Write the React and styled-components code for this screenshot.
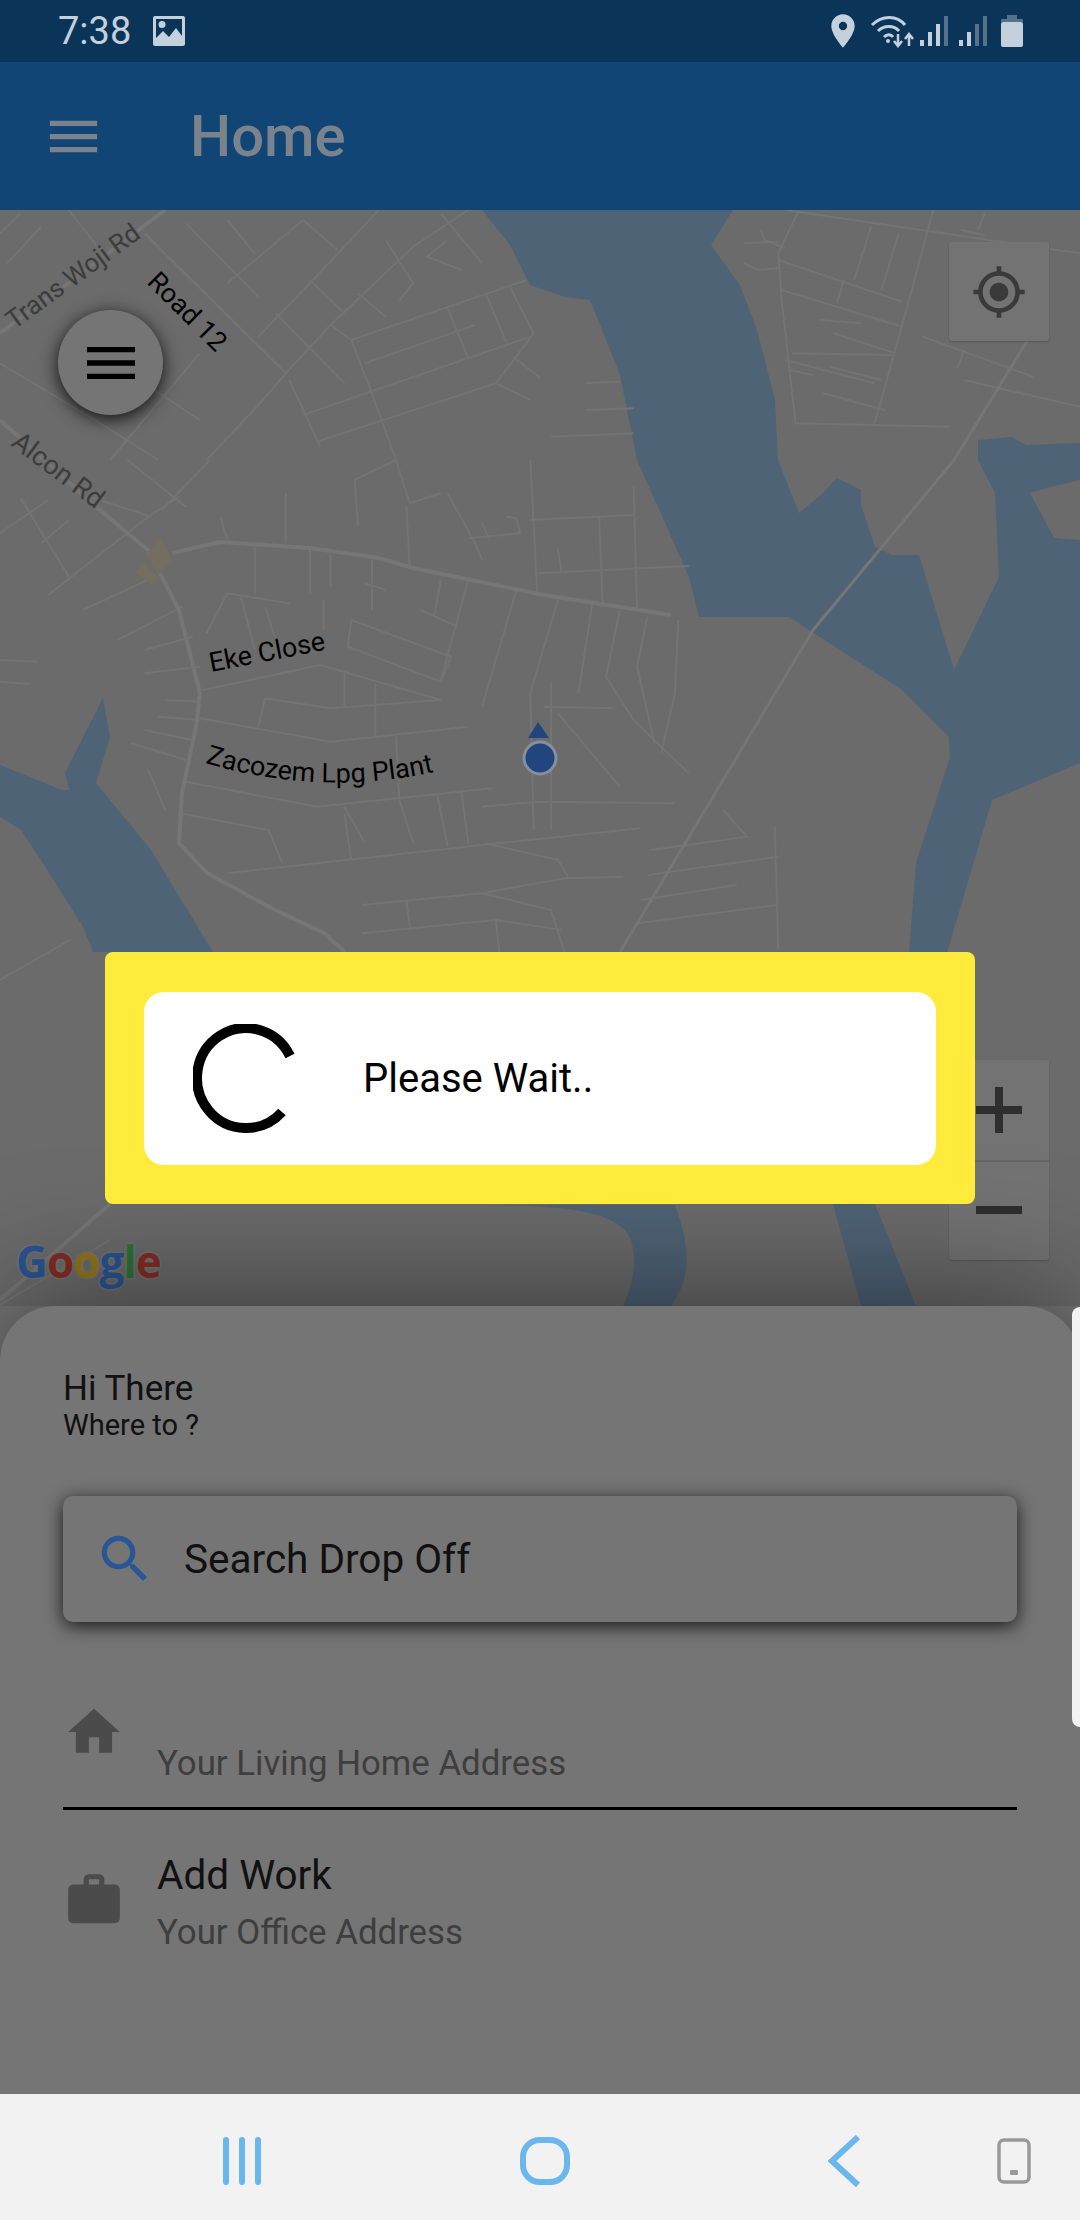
import React from "react";
import styled, { createGlobalStyle } from "styled-components";
import { MdHome, MdWork, MdSearch, MdMenu, MdMyLocation, MdPlace } from "react-icons/md";

const GlobalStyle = createGlobalStyle`
  html, body {
    margin: 0;
    padding: 0;
    background: #757575;
    font-family: Roboto, "Liberation Sans", sans-serif;
  }
`;

const Screen = styled.div`
  position: relative;
  width: 1080px;
  height: 2220px;
  overflow: hidden;
  display: flex;
  flex-direction: column;
`;

const StatusBar = styled.div`
  height: 62px;
  background: #0b3558;
  display: flex;
  align-items: center;
  padding: 0 57px 0 58px;
  color: #c4d0dc;
  flex-shrink: 0;
`;

const Time = styled.span`
  font-size: 38px;
  line-height: 62px;
  width: 95px;
`;

const StatusRight = styled.div`
  margin-left: auto;
  display: flex;
  align-items: center;
`;

const AppBar = styled.div`
  height: 148px;
  background: #114575;
  display: flex;
  align-items: center;
  padding-left: 42px;
  color: #7a838b;
  flex-shrink: 0;
  position: relative;
  z-index: 1;
`;

const AppTitle = styled.h1`
  margin: 0 0 0 85px;
  font-size: 58px;
  font-weight: 500;
`;

const MapArea = styled.div`
  position: relative;
  height: 1096px;
  background: #6b6b6b;
  flex-shrink: 0;
`;

const MapCanvas = styled.svg`
  position: absolute;
  inset: 0;
  width: 1080px;
  height: 1096px;
  display: block;
`;

const RoundMenu = styled.div`
  position: absolute;
  left: 58px;
  top: 100px;
  width: 105px;
  height: 105px;
  border-radius: 50%;
  background: #757575;
  box-shadow: 0 4px 18px rgba(0, 0, 0, 0.85);
  display: flex;
  align-items: center;
  justify-content: center;
  color: #000;
`;

const MapButton = styled.div`
  position: absolute;
  right: 31px;
  top: ${(p) => p.$top}px;
  width: 100px;
  height: ${(p) => p.$height}px;
  background: #737373;
  border-radius: 3px;
  box-shadow: 0 1px 2px rgba(0, 0, 0, 0.2);
  display: flex;
  align-items: center;
  justify-content: center;
  color: #3a3a3a;
`;

const ZoomDivider = styled.div`
  position: absolute;
  right: 31px;
  top: 950px;
  width: 100px;
  height: 2px;
  background: #666;
`;

const GoogleMark = styled.div`
  position: absolute;
  left: 16px;
  top: 1021px;
  font-family: "Open Sans", Roboto, sans-serif;
  font-size: 44px;
  font-weight: 700;
  letter-spacing: -1px;
  text-shadow: 0 0 3px #7a7a7a, 0 0 3px #7a7a7a;
`;

const Letter = styled.span`
  color: ${(p) => p.$color};
`;

const Sheet = styled.div`
  position: relative;
  z-index: 1;
  flex: 1;
  background: #757575;
  border-radius: 55px 55px 0 0;
  padding: 0 63px;
  box-shadow: 0 -6px 130px rgba(0, 0, 0, 0.5);
`;

const Greeting = styled.div`
  margin-top: 64px;
  font-size: 35px;
  line-height: 38px;
  color: #111;
`;

const SubGreeting = styled.div`
  font-size: 29px;
  line-height: 34px;
  color: #111;
`;

const SearchBox = styled.div`
  margin-top: 54px;
  height: 126px;
  border-radius: 10px;
  background: #757575;
  box-shadow: 0 4px 18px rgba(0, 0, 0, 0.8);
  display: flex;
  align-items: center;
  padding-left: 31px;
  color: #111;
  font-size: 40.5px;
`;

const SearchIcon = styled(MdSearch)`
  color: #2a5596;
  margin-right: 28px;
  flex-shrink: 0;
`;

const PlaceRow = styled.div`
  display: flex;
  align-items: ${(p) => p.$align || "center"};
  color: #4b4b4b;
`;

const HomeRow = styled(PlaceRow)`
  margin-top: 71px;
  height: 114px;
  border-bottom: 3px solid #000;
`;

const WorkRow = styled(PlaceRow)`
  margin-top: 37px;
`;

const RowIcon = styled.div`
  width: 94px;
  flex-shrink: 0;
  margin-right: 0;
  display: flex;
  padding-top: ${(p) => p.$top || 0}px;
`;

const RowText = styled.div`
  display: flex;
  flex-direction: column;
`;

const RowTitle = styled.div`
  font-size: 40.5px;
  line-height: 56px;
  color: #111;
`;

const RowHint = styled.div`
  font-size: 34.8px;
  line-height: 40px;
  margin-top: ${(p) => p.$top || 0}px;
  color: #3e3e3e;
`;

const ScrollTab = styled.div`
  position: absolute;
  right: 0;
  top: 1px;
  width: 8px;
  height: 420px;
  background: #f2f2f2;
  border-radius: 12px 0 0 12px;
`;

const NavBar = styled.div`
  height: 126px;
  box-sizing: border-box;
  padding-top: 7px;
  background: #f2f2f2;
  position: relative;
  z-index: 2;
  flex-shrink: 0;
  display: flex;
  align-items: center;
`;

const NavSlot = styled.div`
  margin-left: ${(p) => p.$left}px;
  display: flex;
`;

const Dialog = styled.div`
  position: absolute;
  z-index: 3;
  left: 105px;
  top: 952px;
  width: 870px;
  height: 252px;
  box-sizing: border-box;
  padding: 40px 39px 39px 39px;
  background: #ffeb3b;
  border-radius: 8px;
`;

const DialogBody = styled.div`
  height: 100%;
  background: #fff;
  border-radius: 20px;
  display: flex;
  align-items: center;
  padding-left: 49px;
`;

const WaitText = styled.div`
  margin-left: 68px;
  font-size: 40px;
  color: #000;
`;

// zoomed crops were read at 1.452 across and 3 down
const pts = (list, top) =>
  list.map(([x, y]) => `${(x / 1.452).toFixed(1)},${(top + y / 3).toFixed(1)}`).join(" ");

const upperRoads = [
  [[270, 670], [375, 890]],
  [[440, 660], [330, 850]],
  [[210, 700], [415, 1120]],
  [[440, 660], [490, 750]],
  [[550, 630], [450, 850], [375, 1010]],
  [[680, 630], [600, 740], [480, 975], [415, 1120], [375, 1215], [300, 1380]],
  [[480, 975], [510, 1020], [540, 1180], [575, 1380]],
  [[510, 1020], [765, 840]],
  [[530, 1090], [690, 975]],
  [[440, 1245], [770, 1010]],
  [[460, 1325], [720, 1150]],
  [[650, 925], [680, 1075]],
  [[705, 880], [735, 1025]],
  [[740, 860], [775, 1000], [720, 1150], [770, 1200]],
  [[745, 1070], [785, 1135]],
  [[0, 1090], [130, 1250], [230, 1380]],
  [[100, 1000], [290, 1260]],
  [[290, 1060], [160, 1380]],
  [[420, 1140], [465, 1340]],
  [[850, 1150], [900, 1145]],
  [[800, 1310], [920, 1300]],
  [[1160, 630], [1130, 760], [1135, 900], [1155, 1270], [1380, 1280]],
  [[1130, 780], [1310, 905]],
  [[1135, 870], [1310, 980]],
  [[1140, 630], [1568, 760]],
  [[1265, 680], [1240, 840]],
  [[1305, 700], [1280, 870]],
  [[1355, 630], [1320, 900], [1270, 1270]],
  [[1225, 840], [1215, 910]],
  [[1150, 1060], [1295, 1065]],
  [[1145, 1110], [1180, 1125]],
  [[1205, 1100], [1280, 1140]],
  [[1195, 1180], [1285, 1230]],
  [[1210, 1000], [1300, 1060]],
  [[1340, 1010], [1500, 1130]],
  [[1400, 1140], [1568, 1220]],
  [[1140, 1080], [1270, 1150]],
  [[560, 720], [600, 850], [580, 900]],
  [[450, 840], [500, 940]],
  [[400, 940], [500, 1150]],
  [[520, 880], [560, 950]],
  [[650, 720], [620, 770], [670, 810]],
  [[640, 640], [700, 790]],
  [[330, 660], [370, 760]],
  [[30, 640], [0, 700]],
  [[60, 680], [10, 790]],
  [[100, 630], [160, 790]],
  [[850, 1230], [920, 1225]],
  [[1080, 730], [1130, 725]],
  [[1105, 690], [1110, 720], [1140, 745]],
  [[1080, 790], [1100, 810], [1130, 805]],
  [[1190, 960], [1250, 970]],
  [[1395, 690], [1430, 705]],
  [[1430, 640], [1420, 690]],
  [[1400, 1050], [1390, 1105]],
];

const middleRoads = [
  [[515, 60], [575, 0]],
  [[515, 60], [520, 200]],
  [[595, 130], [575, 0]],
  [[595, 130], [640, 100]],
  [[590, 140], [595, 320]],
  [[770, 0], [780, 400]],
  [[770, 180], [920, 165]],
  [[780, 340], [1000, 318]],
  [[810, 265], [815, 335]],
  [[870, 170], [875, 430]],
  [[920, 80], [925, 450]],
  [[510, 480], [505, 560], [640, 665], [655, 590], [510, 480]],
  [[295, 690], [465, 615], [640, 720], [480, 745], [385, 715], [375, 800]],
  [[290, 775], [480, 845], [680, 800]],
  [[270, 965], [460, 1040], [715, 985]],
  [[545, 670], [545, 830]],
  [[500, 640], [500, 745]],
  [[575, 830], [580, 1020]],
  [[680, 360], [640, 660]],
  [[750, 390], [700, 740]],
  [[810, 420], [770, 700], [775, 1110]],
  [[800, 670], [800, 1110]],
  [[790, 740], [890, 745]],
  [[860, 430], [840, 700]],
  [[900, 450], [880, 650], [920, 780], [1000, 940]],
  [[940, 470], [925, 620], [950, 850]],
  [[985, 480], [980, 700], [960, 880]],
  [[810, 760], [900, 980]],
  [[700, 1040], [780, 1025], [980, 1030]],
  [[500, 1040], [530, 1150]],
  [[580, 1020], [600, 1150]],
  [[635, 1005], [650, 1160]],
  [[670, 995], [680, 1150]],
  [[330, 1240], [700, 1155], [930, 1105]],
  [[705, 1150], [810, 1200], [825, 1250]],
  [[700, 1300], [820, 1255], [905, 1250]],
  [[525, 1335], [700, 1300], [800, 1350], [820, 1478]],
  [[525, 1420], [720, 1380], [815, 1410]],
  [[590, 1320], [595, 1400]],
  [[720, 1380], [725, 1478]],
  [[945, 1170], [1085, 1130], [1050, 1050]],
  [[940, 1245], [1130, 1190]],
  [[930, 1320], [1070, 1275]],
  [[925, 1390], [1130, 1335]],
  [[260, 1060], [390, 1110], [410, 1210]],
  [[1125, 1100], [1130, 1470]],
  [[0, 600], [55, 605]],
  [[0, 665], [45, 672]],
  [[0, 220], [70, 120]],
  [[70, 405], [215, 170]],
  [[130, 110], [220, 170]],
  [[260, 110], [215, 170]],
  [[30, 115], [100, 350]],
  [[100, 180], [60, 250]],
  [[120, 450], [225, 350]],
  [[170, 540], [265, 440]],
  [[210, 570], [280, 530]],
  [[330, 400], [300, 520]],
  [[330, 400], [420, 430]],
  [[350, 410], [370, 570]],
  [[385, 440], [400, 540]],
  [[470, 420], [470, 510]],
  [[415, 100], [415, 250]],
  [[370, 250], [370, 400]],
  [[450, 260], [450, 400]],
  [[320, 170], [330, 240]],
  [[540, 300], [540, 450]],
  [[610, 450], [665, 500]],
  [[530, 370], [560, 390]],
  [[640, 360], [630, 470]],
  [[700, 190], [710, 235]],
  [[735, 170], [750, 175], [755, 220], [680, 235]],
  [[185, 0], [270, 140]],
  [[305, 0], [235, 150]],
  [[650, 100], [690, 250], [700, 300]],
  [[480, 280], [480, 380]],
  [[240, 720], [290, 725]],
  [[230, 770], [290, 780]],
  [[210, 810], [280, 840]],
  [[190, 850], [270, 900]],
  [[215, 930], [240, 1050]],
  [[210, 640], [290, 620]],
  [[500, 1060], [510, 1200]],
];

const MapLabel = ({ x, y, angle, color = "#000", size = 27, children }) => (
  <text
    transform={`translate(${x} ${y}) rotate(${angle})`}
    fontFamily="Roboto, sans-serif"
    fontSize={size}
    fill={color}
    stroke="#6b6b6b"
    strokeWidth="3"
    paintOrder="stroke"
  >
    {children}
  </text>
);

const MapDrawing = () => (
  <MapCanvas viewBox="0 210 1080 1096">
    <g fill="#4f6376">
      <polygon points="482,210 733,210 711,245 740,285 757,330 775,400 778,460 799,513 823,493 837,478 861,490 861,505 875,547 892,555 919,555 954,670 999,577 995,493 978,460 978,440 1012,437 1026,445 1080,443 1080,480 1047,488 1030,493 1054,538 1080,540 1080,763 992,800 947,953 909,953 916,863 950,757 949,737 902,690 789,617 699,617 689,577 637,460 620,375 590,300 565,297 530,285 510,245" />
      <polygon points="833,1204 875,1204 916,1306 861,1306" />
      <path d="M441 1205C540 1205 600 1205 625 1230C640 1250 635 1280 623 1306H671C690 1280 692 1250 675 1205Z" />
      <polygon points="103,698 65,773 69,790 62,790 0,765 0,817 21,830 41,860 83,927 93,952 213,952 151,850 96,783 110,737" />
    </g>
    <g fill="none" stroke="#747474" strokeWidth="2">
      {upperRoads.map((r, i) => (
        <polyline key={i} points={pts(r, 0)} />
      ))}
      {middleRoads.map((r, i) => (
        <polyline key={i} points={pts(r, 460)} />
      ))}
      <polyline points="110,1240 0,1305" />
      <polyline points="70,940 0,980" />
    </g>
    <g fill="none" stroke="#767676" strokeWidth="4">
      <polyline points="0,333 69,283 165,210" />
      <polyline points="0,420 96,507 148,550 179,610 200,693 196,727 182,793 179,843 207,873 275,910 324,933 345,952" />
      <polyline points="172,553 220,542 310,548 379,558 413,568 544,595 671,615" />
      <polyline points="110,1204 0,1300" />
    </g>
    <polyline points="1040,320 954,460 813,630 620,952" fill="none" stroke="#767676" strokeWidth="3" />
    <g fill="#736e60">
      <polygon points="160,537 172,560 158,575 146,555" />
      <polygon points="144,562 158,578 152,585 134,572" />
    </g>
    <MapLabel x={14} y={330} angle={-36} color="#3c3c3c" size={26}>Trans Woji Rd</MapLabel>
    <MapLabel x={146} y={283} angle={45}>Road 12</MapLabel>
    <MapLabel x={10} y={445} angle={37} color="#3c3c3c">Alcon Rd</MapLabel>
    <MapLabel x={211} y={672} angle={-11}>Eke Close</MapLabel>
    <path id="zacozem" d="M205 763 Q320 797 434 772" fill="none" />
    <text fontFamily="Roboto, sans-serif" fontSize="27" fill="#000" stroke="#6b6b6b" strokeWidth="3" paintOrder="stroke">
      <textPath href="#zacozem">Zacozem Lpg Plant</textPath>
    </text>
    <polygon points="538,722 528,738 549,738" fill="#21467f" />
    <circle cx="540" cy="758" r="16" fill="#21467f" stroke="#85909c" strokeWidth="3" />
  </MapCanvas>
);

const ImageGlyph = () => (
  <svg width="32" height="30" viewBox="0 0 32 30">
    <path fill="#c4d0dc" fillRule="evenodd" d="M2 0h28a2 2 0 0 1 2 2v26a2 2 0 0 1-2 2H2a2 2 0 0 1-2-2V2a2 2 0 0 1 2-2zm1 3v19l7-7 6 6 7-9 6 8V3zm6 2a3.5 3.5 0 1 1 0 7 3.5 3.5 0 0 1 0-7z" />
  </svg>
);

const WifiGlyph = () => (
  <svg width="46" height="34" viewBox="0 0 46 34" fill="none" stroke="#c4d0dc" strokeWidth="3" style={{ marginLeft: 7 }}>
    <path d="M2 11C12 1 27 1 35 11" />
    <path d="M8 17c6-6 16-6 21 0" />
    <path d="M14 23c3-3 7-3 9 0" />
    <circle cx="18" cy="27" r="2" fill="#c4d0dc" stroke="none" />
    <path d="M28 20v11M24 27l4 5 4-5" strokeWidth="2.5" />
    <path d="M39 32V21M35 25l4-5 4 5" strokeWidth="2.5" />
  </svg>
);

const SignalGlyph = ({ lit }) => (
  <svg width="28" height="30" viewBox="0 0 28 30" style={{ marginLeft: lit === 3 ? 4 : 11 }}>
    {[0, 1, 2, 3].map((i) => (
      <rect key={i} x={i * 8} y={24 - i * 8} width="4" height={6 + i * 8} fill={i < lit ? "#c4d0dc" : "#56718a"} />
    ))}
  </svg>
);

const BatteryGlyph = () => (
  <svg width="22" height="32" viewBox="0 0 22 32" style={{ marginLeft: 14 }}>
    <rect x="6" y="0" width="10" height="4" fill="#56718a" />
    <rect x="0" y="4" width="22" height="3" rx="1" fill="#56718a" />
    <rect x="0" y="7" width="22" height="25" rx="2" fill="#c4d0dc" />
  </svg>
);

const SpinnerGlyph = () => (
  <svg width="102" height="110" viewBox="0 0 102 110">
    <path d="M97 32A49 50 0 1 0 89 88" fill="none" stroke="#000" strokeWidth="10" />
  </svg>
);

const RecentsGlyph = () => (
  <svg width="40" height="48" viewBox="0 0 40 48" fill="none" stroke="#6bb6ec" strokeWidth="6" strokeLinecap="round">
    <path d="M4 3v42M20 3v42M36 3v42" />
  </svg>
);

const HomeGlyph = () => (
  <svg width="50" height="48" viewBox="0 0 50 48" fill="none" stroke="#6bb6ec" strokeWidth="6">
    <rect x="3" y="3" width="44" height="42" rx="17" />
  </svg>
);

const BackGlyph = () => (
  <svg width="32" height="52" viewBox="0 0 32 52" fill="none" stroke="#6bb6ec" strokeWidth="6">
    <path d="M30 2L4 26l26 24" />
  </svg>
);

const DeviceGlyph = () => (
  <svg width="34" height="46" viewBox="0 0 34 46">
    <rect x="2" y="2" width="30" height="42" rx="5" fill="none" stroke="#999" strokeWidth="3.5" />
    <rect x="13" y="32" width="8" height="5" rx="1" fill="#999" />
  </svg>
);

export default function App() {
  return (
    <Screen>
      <GlobalStyle />
      <StatusBar>
        <Time>7:38</Time>
        <ImageGlyph />
        <StatusRight>
          <MdPlace size={40} />
          <WifiGlyph />
          <SignalGlyph lit={3} />
          <SignalGlyph lit={2} />
          <BatteryGlyph />
        </StatusRight>
      </StatusBar>

      <AppBar>
        <MdMenu size={63} />
        <AppTitle>Home</AppTitle>
      </AppBar>

      <MapArea>
        <MapDrawing />
        <RoundMenu>
          <MdMenu size={64} />
        </RoundMenu>
        <MapButton $top={32} $height={99}>
          <MdMyLocation size={56} />
        </MapButton>
        <MapButton $top={850} $height={200}>
          <svg width="46" height="146" viewBox="0 0 46 146" fill="#2e2e2e">
            <rect x="0" y="19" width="46" height="8" />
            <rect x="19" y="0" width="8" height="46" />
            <rect x="0" y="119" width="46" height="8" />
          </svg>
        </MapButton>
        <ZoomDivider />
        <GoogleMark>
          <Letter $color="#2a5493">G</Letter>
          <Letter $color="#832d23">o</Letter>
          <Letter $color="#94771a">o</Letter>
          <Letter $color="#2a5493">g</Letter>
          <Letter $color="#2f7237">l</Letter>
          <Letter $color="#832d23">e</Letter>
        </GoogleMark>
      </MapArea>

      <Sheet>
        <ScrollTab />
        <Greeting>Hi There</Greeting>
        <SubGreeting>Where to ?</SubGreeting>
        <SearchBox>
          <SearchIcon size={62} />
          Search Drop Off
        </SearchBox>
        <HomeRow $align="flex-start">
          <RowIcon $top={8}>
            <MdHome size={62} />
          </RowIcon>
          <RowText>
            <RowHint $top={50}>Your Living Home Address</RowHint>
          </RowText>
        </HomeRow>
        <WorkRow>
          <RowIcon>
            <MdWork size={62} />
          </RowIcon>
          <RowText>
            <RowTitle>Add Work</RowTitle>
            <RowHint $top={9}>Your Office Address</RowHint>
          </RowText>
        </WorkRow>
      </Sheet>

      <NavBar>
        <NavSlot $left={222}>
          <RecentsGlyph />
        </NavSlot>
        <NavSlot $left={258}>
          <HomeGlyph />
        </NavSlot>
        <NavSlot $left={258}>
          <BackGlyph />
        </NavSlot>
        <NavSlot $left={137}>
          <DeviceGlyph />
        </NavSlot>
      </NavBar>

      <Dialog>
        <DialogBody>
          <SpinnerGlyph />
          <WaitText>Please Wait..</WaitText>
        </DialogBody>
      </Dialog>
    </Screen>
  );
}
